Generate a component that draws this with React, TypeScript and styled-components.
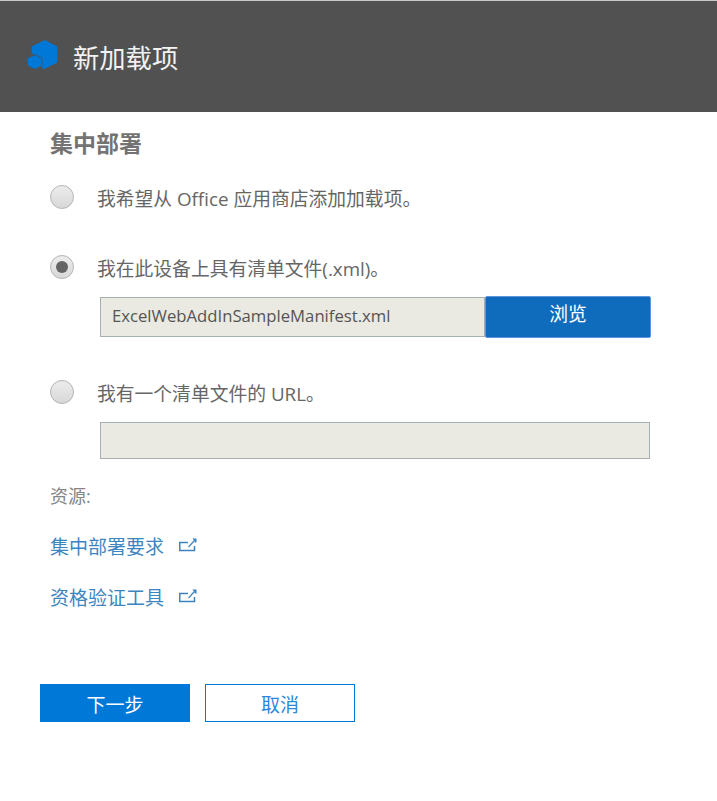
import styled, { createGlobalStyle } from "styled-components";

const cjk = `"Open Sans", "Noto Sans CJK SC", sans-serif`;

const GlobalStyle = createGlobalStyle`
  html, body {
    margin: 0;
    padding: 0;
    background: #fff;
    font-family: ${cjk};
  }
`;

const Page = styled.div`
  width: 717px;
  height: 801px;
  overflow: hidden;
  background: #fff;
`;

const Header = styled.header`
  height: 112px;
  box-sizing: border-box;
  border-top: 1px solid #c8c8c8;
  background: #515151;
  display: flex;
  align-items: center;
  padding-left: 28px;
  gap: 15px;
`;

const LogoBox = styled.span`
  display: flex;
  margin-bottom: 3px;
`;

const Title = styled.h1`
  margin: 2px 0 0;
  font-size: 26.3px;
  font-weight: 400;
  color: #f2f2f2;
  line-height: 36px;
`;

const Content = styled.main`
  padding: 15px 0 0 50px;
`;

const Heading = styled.h2`
  margin: 0 0 26px;
  font-size: 23px;
  line-height: 32px;
  font-weight: 700;
  color: #737373;
`;

const RadioRow = styled.label<{ $gap: number }>`
  display: flex;
  align-items: center;
  gap: 23px;
  height: 24px;
  margin-bottom: ${(p) => p.$gap}px;
  font-size: 18.8px;
  color: #666;
`;

const RadioText = styled.span`
  margin-top: 2px;
`;

const RadioMark = styled.span<{ $checked?: boolean }>`
  width: 24px;
  height: 24px;
  box-sizing: border-box;
  border-radius: 50%;
  border: 1px solid #b4b4b4;
  background: linear-gradient(#ececec, #d8d8d8);
  display: flex;
  align-items: center;
  justify-content: center;
  &::after {
    content: "";
    display: ${(p) => (p.$checked ? "block" : "none")};
    width: 12px;
    height: 12px;
    border-radius: 50%;
    background: #646464;
  }
`;

const FieldRow = styled.div<{ $bottom: number }>`
  display: flex;
  align-items: center;
  margin: 0 0 ${(p) => p.$bottom}px 50px;
`;

const Field = styled.div<{ $width: number; $height: number }>`
  width: ${(p) => p.$width}px;
  height: ${(p) => p.$height}px;
  box-sizing: border-box;
  background: #eae9e2;
  border: 1px solid #a7b0b0;
  padding: 0 0 4px 11px;
  display: flex;
  align-items: center;
  font-size: 16.7px;
  color: #555;
`;

const BrowseButton = styled.button`
  width: 166px;
  height: 42px;
  box-sizing: border-box;
  background: #0f6cbd;
  border: 1px solid #5f93dc;
  border-radius: 2px;
  color: #fff;
  font-family: inherit;
  font-size: 18.8px;
  padding: 0 0 8px;
`;

const ResourceLabel = styled.div`
  font-size: 18px;
  line-height: 26px;
  color: #858585;
  margin-bottom: 24px;
`;

const ResourceLink = styled.a`
  display: flex;
  align-items: center;
  gap: 15px;
  height: 26px;
  margin-bottom: 25px;
  font-size: 19px;
  color: #3d85c0;
`;

const Actions = styled.div`
  display: flex;
  gap: 15px;
  padding-left: 40px;
  margin-top: 74px;
`;

const ActionButton = styled.button<{ $primary?: boolean }>`
  width: 150px;
  height: 38px;
  box-sizing: border-box;
  border: 1px solid #0078d7;
  background: ${(p) => (p.$primary ? "#0078d7" : "#fff")};
  color: ${(p) => (p.$primary ? "#fff" : "#2b88d8")};
  font-family: inherit;
  font-size: 19px;
  padding: 2px 0 0;
`;

const AddinIcon = () => (
  <svg width="30" height="30" viewBox="0 0 30 30" aria-hidden="true">
    <path fill="#0078d7" d="M17 0l12.300 6.500v16L16 29l-2.500-1V18L3.700 13.500v-7z" />
    <path
      fill="#0078d7"
      stroke="#515151"
      strokeWidth="1.500"
      paintOrder="stroke"
      d="M6.800 15l6.800 3.500v7L6.800 29 0 25.500v-7z"
    />
  </svg>
);

const ExternalIcon = () => (
  <svg width="18" height="16" viewBox="0 0 18 16" fill="none" stroke="#3d85c0" strokeWidth="1.500" aria-hidden="true">
    <path d="M9 4.500H0.750V12.500H15.500V8" />
    <path d="M9.500 9L15 3" strokeWidth="1.200" />
    <path d="M13.500 0.500h4v4h-1.500z" fill="#3d85c0" stroke="none" />
  </svg>
);

const App = () => {
  return (
    <Page>
      <GlobalStyle />
      <Header>
        <LogoBox>
          <AddinIcon />
        </LogoBox>
        <Title>新加载项</Title>
      </Header>
      <Content>
        <Heading>集中部署</Heading>
        <RadioRow $gap={46}>
          <RadioMark />
          <RadioText>我希望从 Office 应用商店添加加载项。</RadioText>
        </RadioRow>
        <RadioRow $gap={17}>
          <RadioMark $checked />
          <RadioText>我在此设备上具有清单文件(.xml)。</RadioText>
        </RadioRow>
        <FieldRow $bottom={42}>
          <Field $width={385} $height={40}>ExcelWebAddInSampleManifest.xml</Field>
          <BrowseButton>浏览</BrowseButton>
        </FieldRow>
        <RadioRow $gap={18}>
          <RadioMark />
          <RadioText>我有一个清单文件的 URL。</RadioText>
        </RadioRow>
        <FieldRow $bottom={24}>
          <Field $width={550} $height={37} />
        </FieldRow>
        <ResourceLabel>资源:</ResourceLabel>
        <ResourceLink>
          集中部署要求
          <ExternalIcon />
        </ResourceLink>
        <ResourceLink>
          资格验证工具
          <ExternalIcon />
        </ResourceLink>
      </Content>
      <Actions>
        <ActionButton $primary>下一步</ActionButton>
        <ActionButton>取消</ActionButton>
      </Actions>
    </Page>
  );
};

export default App;
